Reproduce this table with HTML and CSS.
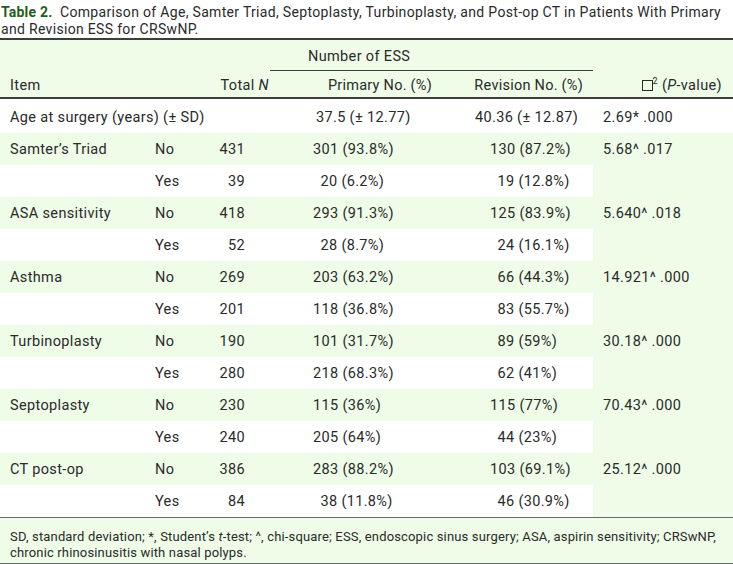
FILE: index.html
```html
<!DOCTYPE html>
<html lang="en">
<head>
<meta charset="utf-8">
<title>Table 2</title>
<link rel="stylesheet" href="styles.css">
</head>
<body>
<div class="page">
  <p class="caption"><span class="label">Table 2.</span>&nbsp; Comparison of Age, Samter Triad, Septoplasty, Turbinoplasty, and Post-op CT in Patients With Primary<br>and Revision ESS for CRSwNP.</p>
  <table class="data">
    <colgroup>
      <col class="c-item"><col class="c-cat"><col class="c-total"><col class="c-pri"><col class="c-rev"><col class="c-chi">
    </colgroup>
    <thead>
      <tr class="h1">
        <th colspan="3"></th>
        <th colspan="2" class="group"><div class="group-label">Number of ESS</div></th>
        <th></th>
      </tr>
      <tr class="h2">
        <th colspan="2" class="h-item">Item</th>
        <th class="h-total">Total <i>N</i></th>
        <th class="h-r">Primary No. (%)</th>
        <th class="h-r">Revision No. (%)</th>
        <th class="h-chi"><span class="tofu"></span><sup>2</sup> (<i>P</i>-value)</th>
      </tr>
    </thead>
    <tbody>
      <tr class="age">
        <td colspan="3" class="item">Age at surgery (years) (± SD)</td>
        <td class="pri age-pri">37.5 (± 12.77)</td>
        <td class="rev age-rev">40.36 (± 12.87)</td>
        <td class="chi">2.69* .000</td>
      </tr>
      <tr class="no">
        <td class="item">Samter’s Triad</td><td class="cat">No</td><td class="num">431</td>
        <td class="pri"><span class="n">301</span> (93.8%)</td><td class="rev"><span class="n">130</span> (87.2%)</td>
        <td class="chi" rowspan="2">5.68^ .017</td>
      </tr>
      <tr class="yes">
        <td class="item"></td><td class="cat">Yes</td><td class="num">39</td>
        <td class="pri"><span class="n">20</span> (6.2%)</td><td class="rev"><span class="n">19</span> (12.8%)</td>
      </tr>
      <tr class="no">
        <td class="item">ASA sensitivity</td><td class="cat">No</td><td class="num">418</td>
        <td class="pri"><span class="n">293</span> (91.3%)</td><td class="rev"><span class="n">125</span> (83.9%)</td>
        <td class="chi" rowspan="2">5.640^ .018</td>
      </tr>
      <tr class="yes">
        <td class="item"></td><td class="cat">Yes</td><td class="num">52</td>
        <td class="pri"><span class="n">28</span> (8.7%)</td><td class="rev"><span class="n">24</span> (16.1%)</td>
      </tr>
      <tr class="no">
        <td class="item">Asthma</td><td class="cat">No</td><td class="num">269</td>
        <td class="pri"><span class="n">203</span> (63.2%)</td><td class="rev"><span class="n">66</span> (44.3%)</td>
        <td class="chi" rowspan="2">14.921^ .000</td>
      </tr>
      <tr class="yes">
        <td class="item"></td><td class="cat">Yes</td><td class="num">201</td>
        <td class="pri"><span class="n">118</span> (36.8%)</td><td class="rev"><span class="n">83</span> (55.7%)</td>
      </tr>
      <tr class="no">
        <td class="item">Turbinoplasty</td><td class="cat">No</td><td class="num">190</td>
        <td class="pri"><span class="n">101</span> (31.7%)</td><td class="rev"><span class="n">89</span> (59%)</td>
        <td class="chi" rowspan="2">30.18^ .000</td>
      </tr>
      <tr class="yes">
        <td class="item"></td><td class="cat">Yes</td><td class="num">280</td>
        <td class="pri"><span class="n">218</span> (68.3%)</td><td class="rev"><span class="n">62</span> (41%)</td>
      </tr>
      <tr class="no">
        <td class="item">Septoplasty</td><td class="cat">No</td><td class="num">230</td>
        <td class="pri"><span class="n">115</span> (36%)</td><td class="rev"><span class="n">115</span> (77%)</td>
        <td class="chi" rowspan="2">70.43^ .000</td>
      </tr>
      <tr class="yes">
        <td class="item"></td><td class="cat">Yes</td><td class="num">240</td>
        <td class="pri"><span class="n">205</span> (64%)</td><td class="rev"><span class="n">44</span> (23%)</td>
      </tr>
      <tr class="no">
        <td class="item">CT post-op</td><td class="cat">No</td><td class="num">386</td>
        <td class="pri"><span class="n">283</span> (88.2%)</td><td class="rev"><span class="n">103</span> (69.1%)</td>
        <td class="chi" rowspan="2">25.12^ .000</td>
      </tr>
      <tr class="yes">
        <td class="item"></td><td class="cat">Yes</td><td class="num">84</td>
        <td class="pri"><span class="n">38</span> (11.8%)</td><td class="rev"><span class="n">46</span> (30.9%)</td>
      </tr>
    </tbody>
    <tfoot>
      <tr>
        <td colspan="6" class="foot">SD, standard deviation; *, Student’s <i>t</i>-test; ^, chi-square; ESS, endoscopic sinus surgery; ASA, aspirin sensitivity; CRSwNP,<br>chronic rhinosinusitis with nasal polyps.</td>
      </tr>
    </tfoot>
  </table>
</div>
</body>
</html>
```
FILE: styles.css
```css
html, body {
  margin: 0;
  padding: 0;
  background: #ffffff;
}

body {
  font-family: Roboto, "Liberation Sans", Arial, sans-serif;
  font-size: 14.5px;
  letter-spacing: 0.35px;
  color: #2a2a2a;
}

.page {
  width: 733px;
}

.caption {
  margin: 0;
  padding: 4px 0 0 1px;
  font-size: 14px;
  letter-spacing: 0.32px;
  line-height: 17px;
  white-space: nowrap;
}

.caption .label {
  font-weight: 700;
  color: #1e5e1e;
  letter-spacing: 0.2px;
}

.data {
  width: 733px;
  table-layout: fixed;
  border-collapse: collapse;
  border-spacing: 0;
  border-top: 2px solid #3d3d3d;
}

.c-item { width: 145px; }
.c-cat { width: 60px; }
.c-total { width: 65px; }
.c-pri { width: 172px; }
.c-rev { width: 151px; }
.c-chi { width: 140px; }

thead th {
  background: #eefce8;
  font-weight: 400;
  line-height: 17px;
  white-space: nowrap;
}

.h1 th {
  padding: 0;
  height: 31px;
  vertical-align: bottom;
}

.group-label {
  text-align: left;
  padding: 8px 0 5px 38px;
  margin-right: -48px;
  border-bottom: 1px solid #3d3d3d;
}

.h2 th {
  padding: 6px 10px 3px 10px;
  border-bottom: 2px solid #3d3d3d;
}

.h-item { text-align: left; }
.h-total { text-align: right; padding-right: 1px !important; }
.h-r { text-align: right; letter-spacing: 0.25px; }
.h-chi { text-align: right; padding-right: 11px !important; }

.tofu {
  display: inline-block;
  width: 9px;
  height: 9px;
  border: 1px solid #2a2a2a;
  vertical-align: -1px;
}

sup {
  font-size: 9px;
  line-height: 0;
  vertical-align: 6px;
}

tbody td {
  padding: 8px 0 6px;
  line-height: 18px;
  white-space: nowrap;
  vertical-align: top;
}

tbody tr.age td {
  padding-top: 10px;
  padding-bottom: 6px;
}

tr.no td { background: #eefce8; }
tr.yes td, tr.age td { background: #ffffff; }
tbody td.chi { background: #eefce8; padding-left: 10px; }
tr.age td.chi { background: #ffffff; }

.item { padding-left: 10px !important; }
.cat { padding-left: 10px !important; }
.num { text-align: right; padding-right: 25px !important; }
.pri { padding-left: 43px !important; }
.rev { padding-left: 48px !important; }
.age-pri { padding-left: 46px !important; }
.age-rev { padding-left: 33px !important; }

.n {
  display: inline-block;
  min-width: 3ch;
  text-align: right;
}

tfoot td.foot {
  background: #eefce8;
  border-top: 1px solid #6a6a6a;
  border-bottom: 1px solid #6a6a6a;
  padding: 11px 10px 2px 10px;
  font-size: 13px;
  letter-spacing: 0.16px;
  line-height: 16px;
  white-space: nowrap;
}
```
